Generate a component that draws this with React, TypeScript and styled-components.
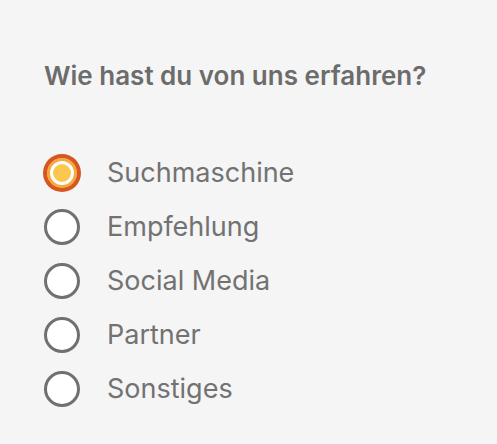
import styled, { createGlobalStyle } from "styled-components";

const GlobalStyle = createGlobalStyle`
  html, body {
    margin: 0;
    padding: 0;
    background: #f5f5f5;
  }
  body {
    font-family: Inter, "Liberation Sans", sans-serif;
    color: #6f6f6f;
  }
`;

const options = ["Suchmaschine", "Empfehlung", "Social Media", "Partner", "Sonstiges"];

const App = () => {
  const selected = 0;

  return (
    <>
      <GlobalStyle />
      <Page>
        <Question>Wie hast du von uns erfahren?</Question>
        <OptionList>
          {options.map((label, i) => (
            <Option key={label}>
              <Radio $checked={i === selected} />
              <Label>{label}</Label>
            </Option>
          ))}
        </OptionList>
      </Page>
    </>
  );
};

const Page = styled.div`
  width: 497px;
  height: 444px;
  box-sizing: border-box;
  padding: 60px 45px 0 44px;
`;

const Question = styled.h2`
  margin: 0;
  font-size: 26px;
  font-weight: 600;
  line-height: 32px;
  color: #6c6c6c;
`;

const OptionList = styled.div`
  display: flex;
  flex-direction: column;
  gap: 18px;
  margin-top: 63px;
`;

const Option = styled.label`
  display: flex;
  align-items: center;
  gap: 27px;
  height: 36px;
  cursor: pointer;
`;

const Radio = styled.span<{ $checked: boolean }>`
  width: 36px;
  height: 36px;
  box-sizing: border-box;
  border-radius: 50%;
  flex-shrink: 0;
  border: 3px solid ${(p) => (p.$checked ? "#d8561f" : "#707070")};
  background: ${(p) => (p.$checked ? "#fcc74f" : "#ffffff")};
  box-shadow: ${(p) =>
    p.$checked
      ? "0 0 0 1px #d8561f, inset 0 0 0 3px #f5a93e, inset 0 0 0 6px #ffffff"
      : "none"};
`;

const Label = styled.span`
  font-size: 27px;
  line-height: 36px;
  color: #727272;
`;

export default App;
